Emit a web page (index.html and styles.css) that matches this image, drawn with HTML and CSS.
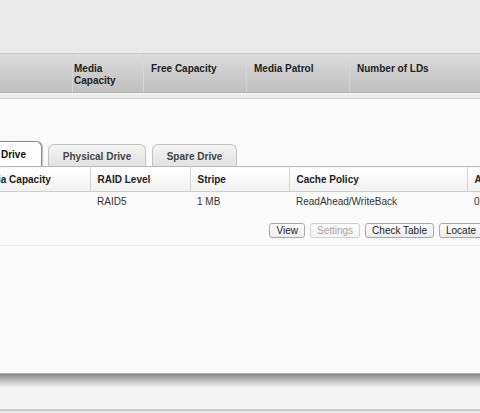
FILE: index.html
```html
<!DOCTYPE html>
<html lang="en">
<head>
  <meta charset="UTF-8" />
  <title>Disk Array – Logical Drive</title>
  <link rel="stylesheet" href="styles.css">
</head>
<body>

<div class="top-area"></div>

<div class="summary-bar">
  <div class="summary-inner">
    <div class="summary-col first"></div>
    <div class="summary-col w-media">Media<br>Capacity</div>
    <div class="summary-col w-free">Free Capacity</div>
    <div class="summary-col w-patrol">Media Patrol</div>
    <div class="summary-col w-lds">Number of LDs</div>
  </div>
</div>
<div class="summary-strip"></div>

<div class="panel">
  <div class="panel-inner">
    <div class="tabs">
      <div class="tab active">Logical Drive</div>
      <div class="tab">Physical Drive</div>
      <div class="tab">Spare Drive</div>
    </div>

    <table class="ld-table">
      <thead>
        <tr>
          <th class="c1">Media Capacity</th>
          <th class="c2">RAID Level</th>
          <th class="c3">Stripe</th>
          <th class="c4">Cache Policy</th>
          <th class="c5">Available</th>
        </tr>
      </thead>
      <tbody>
        <tr>
          <td class="c1"></td>
          <td>RAID5</td>
          <td>1 MB</td>
          <td>ReadAhead/WriteBack</td>
          <td>0 Byte</td>
        </tr>
      </tbody>
    </table>

    <div class="actions">
      <button class="btn">View</button>
      <button class="btn" disabled>Settings</button>
      <button class="btn">Check Table</button>
      <button class="btn">Locate</button>
    </div>
    <div class="actions-rule"></div>
  </div>
</div>

<div class="panel-shadow"></div>
<div class="footer-bar"></div>

</body>
</html>
```

FILE: styles.css
```css
body {
  margin: 0;
  background: #e8e8e8;
  font-family: "Liberation Sans", Arial, sans-serif;
  font-size: 10px;
  color: #222;
  overflow: hidden;
}

.top-area {
  height: 53px;
  background: #e9e9e9;
}

/* gray summary header */
.summary-bar {
  height: 38px;
  background: linear-gradient(#dddddd, #c9c9c9 60%, #c1c1c1);
  border-top: 1px solid #c9c9c9;
  border-bottom: 1px solid #b4b4b4;
  overflow: hidden;
}

.summary-inner {
  display: flex;
  height: 100%;
}

.summary-col {
  box-sizing: border-box;
  padding: 9px 0 0 7px;
  font-weight: bold;
  line-height: 12px;
  border-left: 1px solid #d6d6d6;
  color: #222;
}

.summary-col.first { width: 72px; border-left: none; }
.summary-col.w-media { width: 71px; padding-left: 1px; }
.summary-col.w-free { width: 103px; }
.summary-col.w-patrol { width: 103px; }
.summary-col.w-lds { flex: 1; }

.summary-strip {
  height: 4px;
  background: #ededed;
  border-top: 1px solid #f7f7f7;
  border-bottom: 1px solid #d2d2d2;
}

/* white panel */
.panel {
  height: 274px;
  background: #fafafa;
  border-bottom: 1px solid #b0b0b0;
  overflow: hidden;
}

.panel-inner {
  width: 600px;
  margin-left: -60px;
  padding-top: 43px;
}

.tabs {
  display: flex;
  align-items: flex-end;
  gap: 6px;
  height: 24px;
}

.tab {
  box-sizing: border-box;
  height: 22px;
  padding-top: 6px;
  text-align: center;
  font-weight: bold;
  color: #444;
  background: linear-gradient(#f4f4f4, #e2e2e2);
  border: 1px solid #c2c2c2;
  border-bottom: none;
  border-radius: 6px 6px 0 0;
}

.tab:nth-child(2) { width: 98px; }
.tab:nth-child(3) { width: 85px; }

.tab.active {
  width: 102px;
  height: 25px;
  padding: 7px 15px 0 0;
  text-align: right;
  color: #111;
  background: #fdfdfd;
  border-color: #8c8c8c;
  box-shadow: 1px 0 1px rgba(0, 0, 0, 0.25);
  position: relative;
  z-index: 1;
}

.ld-table {
  border-collapse: collapse;
  table-layout: fixed;
  width: 600px;
  border-top: 1px solid #bdbdbd;
}

.ld-table th,
.ld-table td {
  box-sizing: border-box;
  text-align: left;
  padding: 0 0 0 7px;
  white-space: nowrap;
  overflow: hidden;
}

.ld-table th {
  height: 25px;
  font-weight: bold;
  color: #222;
  background: linear-gradient(#ffffff, #f1f1f1);
  border-left: 1px solid #d4d4d4;
  border-bottom: 1px solid #cfcfcf;
}

.ld-table th.c1 { border-left: none; padding-left: 38px; }

.ld-table td {
  height: 19px;
  color: #333;
}

.c1 { width: 150px; }
.c2 { width: 100px; }
.c3 { width: 99px; }
.c4 { width: 178px; }

.actions {
  display: flex;
  justify-content: flex-end;
  gap: 5px;
  padding: 12px 57px 0 0;
}

.btn {
  box-sizing: border-box;
  height: 15px;
  padding: 0 6px;
  font-family: inherit;
  font-size: 10px;
  line-height: 13px;
  color: #222;
  background: linear-gradient(#ffffff, #ececec);
  border: 1px solid #a8a8a8;
  border-radius: 3px;
}

.btn:disabled {
  color: #a4a4a4;
  border-color: #cfcfcf;
  background: linear-gradient(#fdfdfd, #f4f4f4);
}

.actions-rule {
  margin-top: 7px;
  border-top: 1px dotted #e0e0e0;
}

/* bottom edge */
.panel-shadow {
  height: 13px;
  background: linear-gradient(#8a8a8a, #a8a8a8 30%, #e6e6e6 90%, #f2f2f2);
}

.footer-bar {
  height: 22px;
  background: #f4f4f4;
  border-bottom: 2px solid #cdcdcd;
}
```
